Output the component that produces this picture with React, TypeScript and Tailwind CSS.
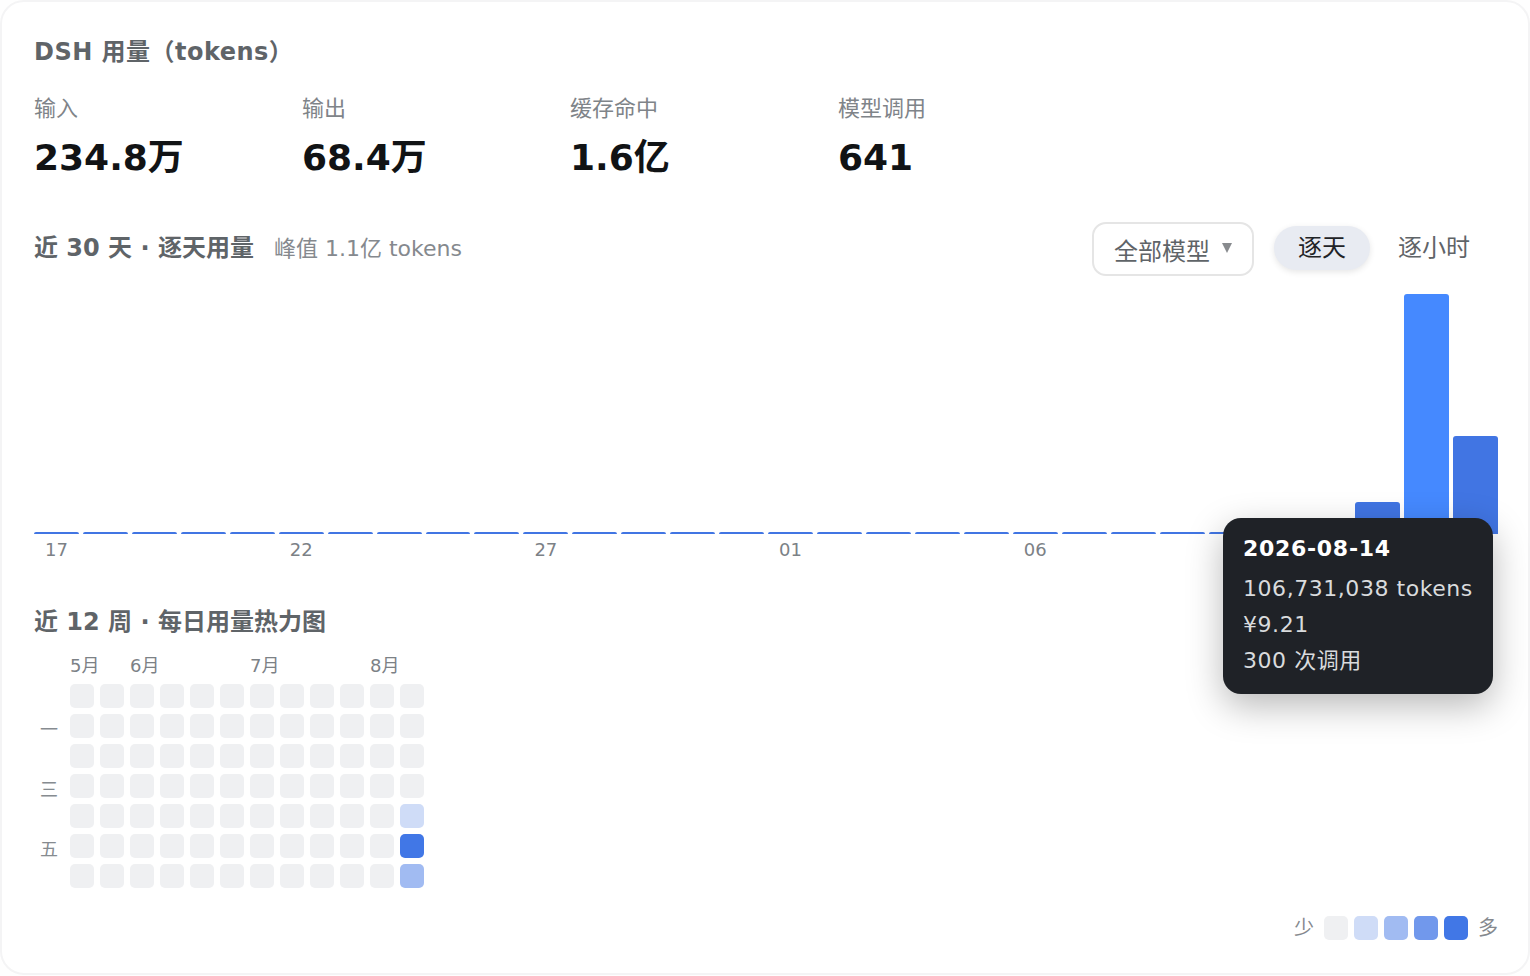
import React from 'react';

const stats = [
  { label: '输入', value: '234.8万' },
  { label: '输出', value: '68.4万' },
  { label: '缓存命中', value: '1.6亿' },
  { label: '模型调用', value: '641' },
];

const barHeights = [
  2, 2, 2, 2, 2, 2, 2, 2, 2, 2, 2, 2, 2, 2, 2, 2, 2, 2, 2, 2, 2, 2, 2, 2, 2, 2, 2, 32, 240, 98,
];

const ticks: Record<number, string> = { 0: '17', 5: '22', 10: '27', 15: '01', 20: '06' };
const months: Record<number, string> = { 0: '5月', 2: '6月', 6: '7月', 10: '8月' };
const weekdays = ['', '一', '', '三', '', '五', ''];

const heatColors = ['bg-[#eff0f2]', 'bg-[#cfdcf7]', 'bg-[#a1bbf2]', 'bg-[#7198ec]', 'bg-[#4177e6]'];
// only the last week has any usage
const lastWeek = [0, 0, 0, 0, 1, 4, 2];

function Heatmap() {
  return (
    <div className="mt-[13px] flex gap-3">
      <div className="w-6 pt-[31px]">
        {weekdays.map((d, i) => (
          <div key={i} className="flex h-[30px] items-center justify-end text-[18px] text-[#868b90]">
            {d}
          </div>
        ))}
      </div>
      <div>
        <div className="flex h-[31px] gap-[6px]">
          {Array.from({ length: 12 }).map((_, i) => (
            <div key={i} className="w-6 whitespace-nowrap text-[18px] leading-[26px] text-[#7c8186]">
              {months[i]}
            </div>
          ))}
        </div>
        <div className="flex gap-[6px]">
          {Array.from({ length: 12 }).map((_, w) => (
            <div key={w} className="flex flex-col gap-[6px]">
              {lastWeek.map((level, d) => (
                <div key={d} className={`h-6 w-6 rounded-[5px] ${heatColors[w === 11 ? level : 0]}`} />
              ))}
            </div>
          ))}
        </div>
      </div>
    </div>
  );
}

export default function App() {
  return (
    <div className="h-[976px] w-[1530px] bg-[#fefefe] font-['DejaVu_Sans','Noto_Sans_CJK_SC',sans-serif]">
      <div className="relative h-[975px] rounded-[24px] border-2 border-[#f4f4f5] bg-white pt-[32px] pr-[30px] pl-8">
        <h2 className="text-[24px] leading-[36px] font-bold tracking-[0.02em] text-[#5f6468]">DSH 用量（tokens）</h2>

        <div className="mt-[23px] flex">
          {stats.map((s) => (
            <div key={s.label} className="w-[268px]">
              <div className="text-[22px] leading-[32px] text-[#7f8489]">{s.label}</div>
              <div className="mt-[11px] text-[36px] leading-[44px] font-bold text-[#111315]">{s.value}</div>
            </div>
          ))}
        </div>

        <div className="mt-[41px] flex h-[54px] items-center justify-between">
          <div className="flex items-center gap-5">
            <span className="text-[24px] font-bold text-[#5f6468]">近 30 天 · 逐天用量</span>
            <span className="text-[22px] text-[#85898e]">峰值 1.1亿 tokens</span>
          </div>
          <div className="flex items-center gap-4">
            <div className="mt-[2px] flex h-[54px] w-[162px] items-center gap-3 rounded-[14px] border-2 border-[#e5e5e5] pl-5">
              <span className="pt-[6px] text-[24px] text-[#5f6468]">全部模型</span>
              <svg viewBox="0 0 10 10" className="mb-[2px] h-[10px] w-[10px]">
                <path d="M0 0H10L5 10Z" fill="#888b8e" />
              </svg>
            </div>
            <div className="flex gap-1 p-1">
              <div className="flex h-11 items-center rounded-[22px] bg-[#e8ebf2] px-6 text-[24px] text-[#1f2327] shadow-[0_2px_6px_rgba(0,0,0,0.1)]">
                逐天
              </div>
              <div className="flex h-11 items-center rounded-[22px] px-6 text-[24px] text-[#5f6468]">逐小时</div>
            </div>
          </div>
        </div>

        <div className="mt-[19px] flex h-[240px] items-end gap-1">
          {barHeights.map((h, i) => (
            <div key={i} className="flex h-full flex-1 items-end">
              <div
                className={`w-full rounded-t-[3px] ${i === 28 ? 'bg-[#4589ff]' : 'bg-[#4175e3]'}`}
                style={{ height: h }}
              />
            </div>
          ))}
        </div>
        <div className="mt-[4px] flex gap-1">
          {barHeights.map((_, i) => (
            <div key={i} className="flex-1 text-center text-[18px] leading-[24px] whitespace-nowrap text-[#7c8186]">
              {ticks[i]}
            </div>
          ))}
        </div>

        <h3 className="mt-[42px] text-[24px] leading-[36px] font-bold text-[#5f6468]">近 12 周 · 每日用量热力图</h3>
        <Heatmap />

        <div className="mt-[22px] flex items-center justify-end gap-[6px]">
          <span className="mr-[4px] text-[20px] leading-[24px] text-[#85898e]">少</span>
          {heatColors.map((c) => (
            <div key={c} className={`h-6 w-6 rounded-[5px] ${c}`} />
          ))}
          <span className="ml-[4px] text-[20px] leading-[24px] text-[#85898e]">多</span>
        </div>

        <div className="absolute top-[516px] left-[1221px] h-[176px] w-[270px] rounded-[18px] bg-[#1f2227] px-5 pt-[13px] whitespace-nowrap text-[22px] leading-[36px] tracking-[0.55px] text-[#d9dbdd] shadow-[0_12px_36px_rgba(0,0,0,0.28)]">
          <div className="mb-[4px] font-bold tracking-[0.7px] text-white">2026-08-14</div>
          <div>106,731,038 tokens</div>
          <div>¥9.21</div>
          <div>300 次调用</div>
        </div>
      </div>
    </div>
  );
}
